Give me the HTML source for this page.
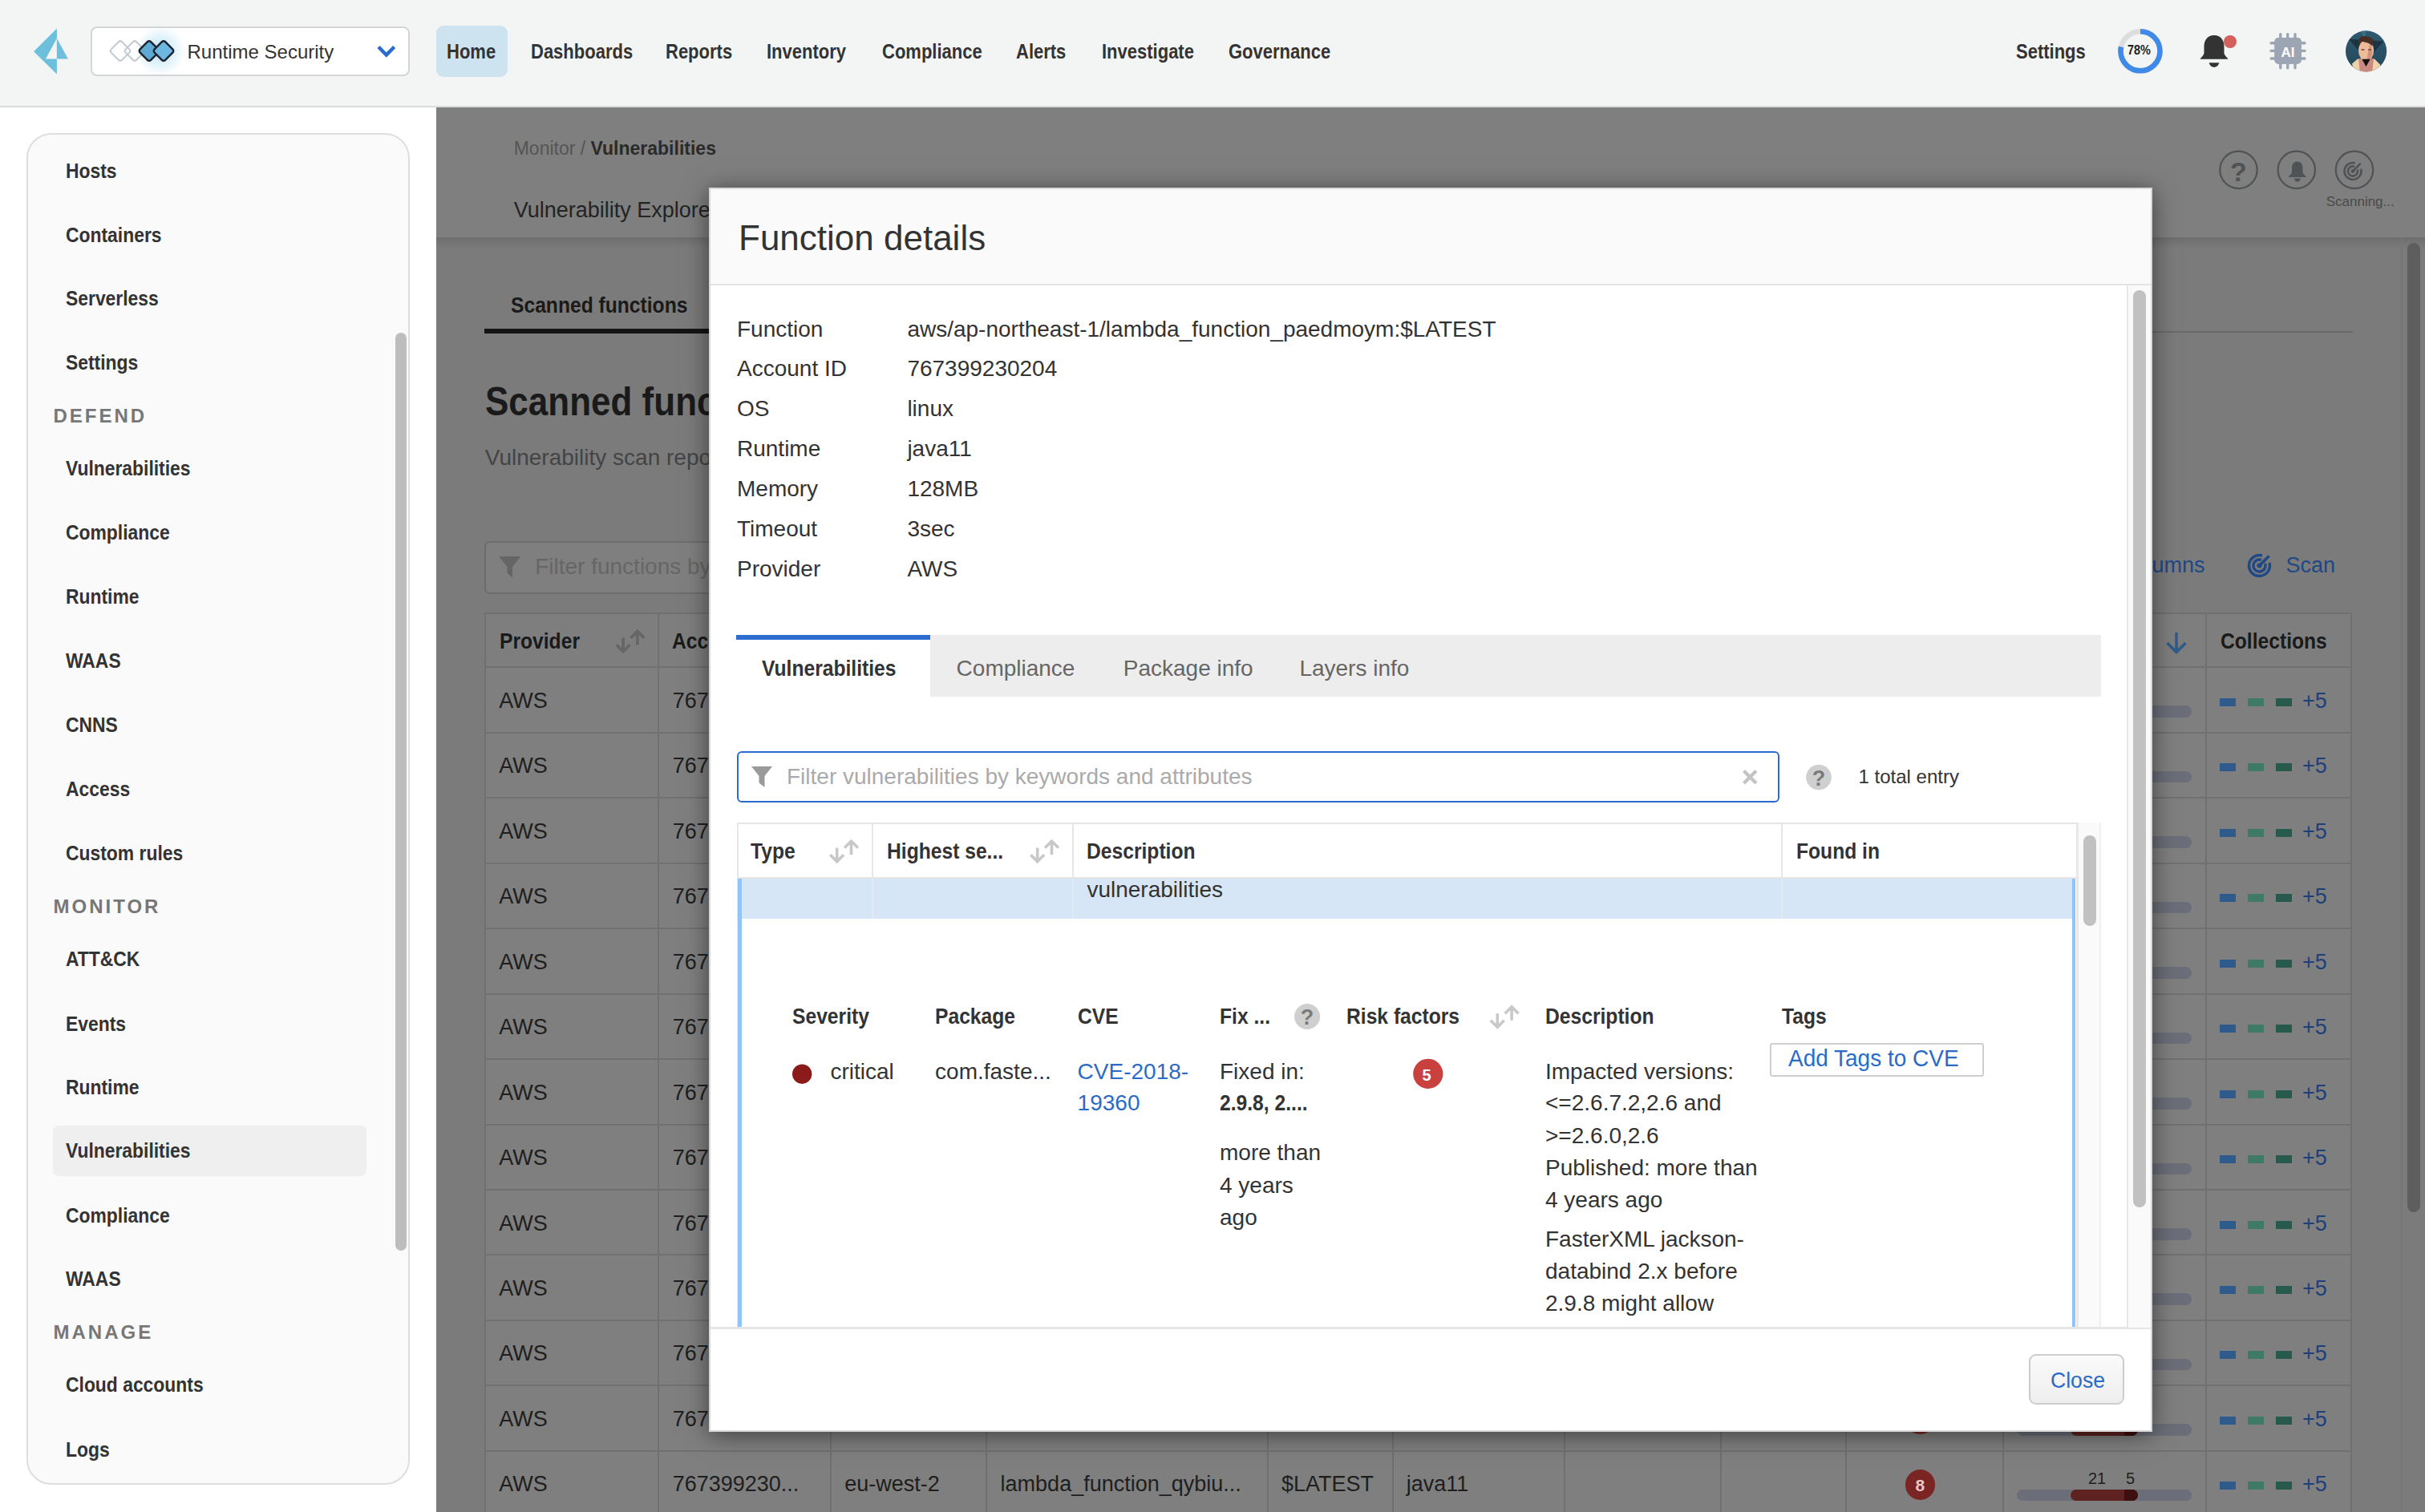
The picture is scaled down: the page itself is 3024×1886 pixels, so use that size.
<!DOCTYPE html><html><head><meta charset="utf-8"><style>
html,body{margin:0;padding:0;width:3024px;height:1886px;overflow:hidden;background:#fff;font-family:"Liberation Sans",sans-serif}
.t{position:absolute;line-height:1;white-space:nowrap;transform-origin:0 0}
.r{position:absolute}
svg{position:absolute;overflow:visible}
</style></head><body>

<div class="r" style="left:0px;top:0px;width:3024px;height:133px;background:#f3f4f4;"></div>
<div class="r" style="left:0px;top:132px;width:3024px;height:2px;background:#d9dcdd;"></div>
<svg style="left:0;top:0" width="100" height="100"><path d="M70.9,35.5 L42.1,64.3 L70.9,92.4 L70.9,73.4 L56.9,73.4 L70.9,47.8 Z" fill="#6cc0dc"/><path d="M70.9,47.8 L84.9,73.4 L70.9,73.4 Z" fill="#6cc0dc"/></svg>
<div class="r" style="left:113px;top:33px;width:398px;height:62px;background:#fff;border:2px solid #d3d5d7;border-radius:8px;box-sizing:border-box"></div>
<svg style="left:0;top:0" width="240" height="100"><defs><radialGradient id="glow"><stop offset="0" stop-color="#a8dcf4" stop-opacity="0.75"/><stop offset="1" stop-color="#9fd8f3" stop-opacity="0"/></radialGradient></defs><circle cx="200" cy="63.5" r="31" fill="url(#glow)"/><rect x="140.5" y="54" width="19" height="19" rx="3" transform="rotate(45 150 63.5)" fill="none" stroke="#c3c8d1" stroke-width="2"/><rect x="158.5" y="54" width="19" height="19" rx="3" transform="rotate(45 168 63.5)" fill="none" stroke="#c3c8d1" stroke-width="2"/><rect x="176.5" y="54" width="19" height="19" rx="3" transform="rotate(45 186 63.5)" fill="#5eaad4" stroke="#1d2630" stroke-width="2.5"/><rect x="194.5" y="54" width="19" height="19" rx="3" transform="rotate(45 204 63.5)" fill="#6db7e1" stroke="#1d2630" stroke-width="2.5"/></svg>
<div class="t" style="left:233.5px;top:72.6px;font-size:24px;color:#333;font-weight:400;transform:translateY(-20.32px);">Runtime Security</div>
<svg style="left:0;top:0" width="520" height="100"><path d="M472,58.5 L481.8,68.5 L491.6,58.5" fill="none" stroke="#2a6bd0" stroke-width="4.5"/></svg>
<div class="r" style="left:544px;top:32px;width:89px;height:64px;background:#cde4f0;border-radius:9px"></div>
<div class="t" style="left:556.7px;top:73.2px;font-size:25px;color:#333;font-weight:700;transform:translateY(-21.16px) scaleX(0.88);">Home</div>
<div class="t" style="left:661.5px;top:73.2px;font-size:25px;color:#333;font-weight:700;transform:translateY(-21.16px) scaleX(0.88);">Dashboards</div>
<div class="t" style="left:830.3px;top:73.2px;font-size:25px;color:#333;font-weight:700;transform:translateY(-21.16px) scaleX(0.88);">Reports</div>
<div class="t" style="left:956px;top:73.2px;font-size:25px;color:#333;font-weight:700;transform:translateY(-21.16px) scaleX(0.88);">Inventory</div>
<div class="t" style="left:1100px;top:73.2px;font-size:25px;color:#333;font-weight:700;transform:translateY(-21.16px) scaleX(0.88);">Compliance</div>
<div class="t" style="left:1267px;top:73.2px;font-size:25px;color:#333;font-weight:700;transform:translateY(-21.16px) scaleX(0.88);">Alerts</div>
<div class="t" style="left:1373.8px;top:73.2px;font-size:25px;color:#333;font-weight:700;transform:translateY(-21.16px) scaleX(0.88);">Investigate</div>
<div class="t" style="left:1532.4px;top:73.2px;font-size:25px;color:#333;font-weight:700;transform:translateY(-21.16px) scaleX(0.88);">Governance</div>
<div class="t" style="left:2514px;top:73.3px;font-size:25px;color:#333;font-weight:700;transform:translateY(-21.16px) scaleX(0.88);">Settings</div>
<svg style="left:0;top:0" width="3024" height="134"><circle cx="2669" cy="63.8" r="24.5" fill="none" stroke="#dddddd" stroke-width="6.6"/><circle cx="2669" cy="63.8" r="24.5" fill="none" stroke="#3f8ae8" stroke-width="6.6" stroke-dasharray="120.07 153.94" transform="rotate(-90 2669 63.8)"/></svg>
<div class="t" style="left:2653px;top:68.9px;font-size:16px;color:#222;font-weight:700;transform:translateY(-13.54px) scaleX(0.9);">78%</div>
<svg style="left:0;top:0" width="3024" height="134"><path d="M2761,44 C2752,44 2748.5,51 2748.5,58 L2748.5,66 C2748.5,69 2745,71 2743.6,73.8 L2778.5,73.8 C2777,71 2773.5,69 2773.5,66 L2773.5,58 C2773.5,51 2770,44 2761,44 Z" fill="#333"/><path d="M2754.7,78.2 L2767.3,78.2 C2766.5,81.5 2764,83.7 2761,83.7 C2758,83.7 2755.5,81.5 2754.7,78.2 Z" fill="#333"/><circle cx="2781" cy="52" r="8" fill="#d45f5b"/></svg>
<svg style="left:0;top:0" width="3024" height="134"><g fill="#9ca5b3"><rect x="2836.4" y="47" width="33.4" height="32.7" rx="5"/><rect x="2842.1000000000004" y="41" width="3.4" height="45.5" rx="1.7"/><rect x="2851.0" y="41" width="3.4" height="45.5" rx="1.7"/><rect x="2860.3" y="41" width="3.4" height="45.5" rx="1.7"/><rect x="2830.4" y="52.099999999999994" width="45.3" height="3.4" rx="1.7"/><rect x="2830.4" y="61.699999999999996" width="45.3" height="3.4" rx="1.7"/><rect x="2830.4" y="71.3" width="45.3" height="3.4" rx="1.7"/><rect x="2836.4" y="47" width="33.4" height="32.7" rx="5"/></g><text x="2853" y="71" font-family="Liberation Sans" font-weight="700" font-size="17" fill="#fff" text-anchor="middle">AI</text></svg>
<svg style="left:0;top:0" width="3024" height="134"><defs><clipPath id="av"><circle cx="2950.6" cy="63.8" r="25.6"/></clipPath><linearGradient id="avg" x1="0" y1="0" x2="0" y2="1"><stop offset="0" stop-color="#2e5a70"/><stop offset="1" stop-color="#24475a"/></linearGradient></defs><g clip-path="url(#av)"><rect x="2924" y="37" width="54" height="54" fill="url(#avg)"/><path d="M2944,37 L2951,37 L2948,50 Z" fill="#3f7590" opacity="0.8"/><path d="M2929.1,48.7 L2972.4,51.5 L2951.3,75 Z" fill="#1c3442"/><path d="M2933,79.6 L2940,73.5 L2961,73.5 L2968.5,81 L2964,92 L2936,92 Z" fill="#f1d2a8"/><path d="M2941,73 L2960,73 L2958,92 L2943,92 Z" fill="#c98a82"/><ellipse cx="2950.6" cy="63" rx="9.6" ry="13" fill="#eebc9a"/><path d="M2955,55 C2959,60 2960,68 2955,75 L2951,76 Z" fill="#c47f6c" opacity="0.7"/><path d="M2940.6,56 C2940,48 2944,45 2948,45 C2953,45 2958,47 2961,51 L2958,53 C2958,58 2959.5,60 2959.5,60 C2957,54 2950,52 2944,52 C2942,54 2941.5,57 2940.6,56 Z" fill="#4a2e26"/><ellipse cx="2946.5" cy="62" rx="2.2" ry="1" fill="#7b5450"/><ellipse cx="2955" cy="62" rx="2.2" ry="1" fill="#7b5450"/><path d="M2945.4,73.7 L2955.7,73.7 L2950.5,83 Z" fill="#111"/></g></svg>
<div class="r" style="left:33px;top:166px;width:478px;height:1686px;background:#fafafa;border:2px solid #dedede;border-radius:31px;box-sizing:border-box"></div>
<div class="r" style="left:493px;top:415px;width:14px;height:1145px;background:#bdbdbd;border-radius:7px"></div>
<div class="r" style="left:66px;top:1404px;width:391px;height:63px;background:#efefef;border-radius:7px"></div>
<div class="t" style="left:82.2px;top:221.6px;font-size:26px;color:#333;font-weight:700;transform:translateY(-22.01px) scaleX(0.88);">Hosts</div>
<div class="t" style="left:82.2px;top:301.6px;font-size:26px;color:#333;font-weight:700;transform:translateY(-22.01px) scaleX(0.88);">Containers</div>
<div class="t" style="left:82.2px;top:380.8px;font-size:26px;color:#333;font-weight:700;transform:translateY(-22.01px) scaleX(0.88);">Serverless</div>
<div class="t" style="left:82.2px;top:461px;font-size:26px;color:#333;font-weight:700;transform:translateY(-22.01px) scaleX(0.88);">Settings</div>
<div class="t" style="left:82.2px;top:593px;font-size:26px;color:#333;font-weight:700;transform:translateY(-22.01px) scaleX(0.88);">Vulnerabilities</div>
<div class="t" style="left:82.2px;top:673px;font-size:26px;color:#333;font-weight:700;transform:translateY(-22.01px) scaleX(0.88);">Compliance</div>
<div class="t" style="left:82.2px;top:753px;font-size:26px;color:#333;font-weight:700;transform:translateY(-22.01px) scaleX(0.88);">Runtime</div>
<div class="t" style="left:82.2px;top:833px;font-size:26px;color:#333;font-weight:700;transform:translateY(-22.01px) scaleX(0.88);">WAAS</div>
<div class="t" style="left:82.2px;top:913px;font-size:26px;color:#333;font-weight:700;transform:translateY(-22.01px) scaleX(0.88);">CNNS</div>
<div class="t" style="left:82.2px;top:993px;font-size:26px;color:#333;font-weight:700;transform:translateY(-22.01px) scaleX(0.88);">Access</div>
<div class="t" style="left:82.2px;top:1073px;font-size:26px;color:#333;font-weight:700;transform:translateY(-22.01px) scaleX(0.88);">Custom rules</div>
<div class="t" style="left:82.2px;top:1205px;font-size:26px;color:#333;font-weight:700;transform:translateY(-22.01px) scaleX(0.88);">ATT&amp;CK</div>
<div class="t" style="left:82.2px;top:1285.5px;font-size:26px;color:#333;font-weight:700;transform:translateY(-22.01px) scaleX(0.88);">Events</div>
<div class="t" style="left:82.2px;top:1365px;font-size:26px;color:#333;font-weight:700;transform:translateY(-22.01px) scaleX(0.88);">Runtime</div>
<div class="t" style="left:82.2px;top:1444.4px;font-size:26px;color:#333;font-weight:700;transform:translateY(-22.01px) scaleX(0.88);">Vulnerabilities</div>
<div class="t" style="left:82.2px;top:1525px;font-size:26px;color:#333;font-weight:700;transform:translateY(-22.01px) scaleX(0.88);">Compliance</div>
<div class="t" style="left:82.2px;top:1604px;font-size:26px;color:#333;font-weight:700;transform:translateY(-22.01px) scaleX(0.88);">WAAS</div>
<div class="t" style="left:82.2px;top:1736.4px;font-size:26px;color:#333;font-weight:700;transform:translateY(-22.01px) scaleX(0.88);">Cloud accounts</div>
<div class="t" style="left:82.2px;top:1817px;font-size:26px;color:#333;font-weight:700;transform:translateY(-22.01px) scaleX(0.88);">Logs</div>
<div class="t" style="left:66.5px;top:526.7px;font-size:24px;color:#777;font-weight:700;transform:translateY(-20.32px);letter-spacing:3px">DEFEND</div>
<div class="t" style="left:66.5px;top:1139px;font-size:24px;color:#777;font-weight:700;transform:translateY(-20.32px);letter-spacing:3px">MONITOR</div>
<div class="t" style="left:66.5px;top:1670.4px;font-size:24px;color:#777;font-weight:700;transform:translateY(-20.32px);letter-spacing:3px">MANAGE</div>
<div class="r" style="left:544px;top:134px;width:2480px;height:1752px;background:#7b7b7b;"></div>
<div class="r" style="left:544px;top:134px;width:2480px;height:162px;background:#7f7f7f;"></div>
<div class="r" style="left:544px;top:296px;width:2480px;height:14px;background:linear-gradient(#6e6e6e,#7b7b7b)"></div>
<div class="t" style="left:640.7px;top:192.6px;font-size:23px;color:#555;font-weight:400;transform:translateY(-19.47px);">Monitor / <span style="color:#2a2a2a;font-weight:700">Vulnerabilities</span></div>
<div class="t" style="left:640.7px;top:272px;font-size:27px;color:#232323;font-weight:400;transform:translateY(-22.86px);">Vulnerability Explorer</div>
<div class="t" style="left:636.6px;top:390.5px;font-size:28px;color:#1a1a1a;font-weight:700;transform:translateY(-23.70px) scaleX(0.88);">Scanned functions</div>
<div class="r" style="left:604px;top:413px;width:2330px;height:2px;background:#6a6a6a;"></div>
<div class="r" style="left:604px;top:410px;width:296px;height:6px;background:#141414;"></div>
<div class="t" style="left:604.8px;top:518px;font-size:50px;color:#1a1a1a;font-weight:700;transform:translateY(-42.33px) scaleX(0.88);">Scanned functions</div>
<div class="t" style="left:604.8px;top:581px;font-size:28px;color:#444;font-weight:400;transform:translateY(-23.70px);">Vulnerability scan reports</div>
<div class="r" style="left:604px;top:675px;width:1956px;height:65.5px;background:#7f7f7f;border:2px solid #6c6c6c;border-radius:7px;box-sizing:border-box"></div>
<svg style="left:0;top:0" width="700" height="760"><path d="M622,694 L649.4,694 L639,707 L639,720.5 L632.5,715 L632.5,707 Z" fill="#656565"/></svg>
<div class="t" style="left:667.2px;top:716.7px;font-size:28px;color:#666;font-weight:400;transform:translateY(-23.70px);">Filter functions by keywords and attributes</div>
<div class="t" style="left:2642.9px;top:714.6px;font-size:27px;color:#1e4886;font-weight:400;transform:translateY(-22.86px);">Columns</div>
<svg style="left:0;top:0" width="3024" height="760"><g fill="none" stroke="#1e4886" stroke-width="3.4" stroke-linecap="round"><path d="M2830.30,703.24 A13,13 0 1 1 2819.76,692.70"/><path d="M2824.93,704.19 A7.539999999999999,7.539999999999999 0 1 1 2818.81,698.07"/><path d="M2817.5,705.5 L2828.55,694.45"/></g><circle cx="2817.5" cy="705.5" r="3.06" fill="#1e4886"/></svg>
<div class="t" style="left:2850.6px;top:714.6px;font-size:27px;color:#1e4886;font-weight:400;transform:translateY(-22.86px);">Scan</div>
<div class="r" style="left:2994px;top:296px;width:2px;height:1590px;background:#767676;"></div>
<div class="r" style="left:3002px;top:303px;width:16px;height:1209px;background:#5e5e5e;border-radius:8px"></div>
<div class="r" style="left:605px;top:765px;width:2327px;height:1121px;background:#7f7f7f;"></div>
<div class="r" style="left:605px;top:765px;width:2327px;height:68px;background:#7e7e7e;"></div>
<div class="r" style="left:604px;top:765px;width:2px;height:1121px;background:#707070;"></div>
<div class="r" style="left:819.6px;top:765px;width:2.0px;height:1121px;background:#707070;"></div>
<div class="r" style="left:1035.4px;top:765px;width:2.0px;height:1121px;background:#707070;"></div>
<div class="r" style="left:1229px;top:765px;width:2px;height:1121px;background:#707070;"></div>
<div class="r" style="left:1580px;top:765px;width:2px;height:1121px;background:#707070;"></div>
<div class="r" style="left:1735.8px;top:765px;width:2.0px;height:1121px;background:#707070;"></div>
<div class="r" style="left:1949.6px;top:765px;width:2.0px;height:1121px;background:#707070;"></div>
<div class="r" style="left:2145px;top:765px;width:2px;height:1121px;background:#707070;"></div>
<div class="r" style="left:2300.7px;top:765px;width:2.0px;height:1121px;background:#707070;"></div>
<div class="r" style="left:2497.4px;top:765px;width:2.0px;height:1121px;background:#707070;"></div>
<div class="r" style="left:2750px;top:765px;width:2px;height:1121px;background:#707070;"></div>
<div class="r" style="left:2931px;top:765px;width:2px;height:1121px;background:#707070;"></div>
<div class="r" style="left:605px;top:764px;width:2327px;height:2px;background:#707070;"></div>
<div class="r" style="left:605px;top:831.4px;width:2327px;height:2.0px;background:#707070;"></div>
<div class="r" style="left:605px;top:912.85px;width:2327px;height:2.0px;background:#707070;"></div>
<div class="r" style="left:605px;top:994.3px;width:2327px;height:2.0px;background:#707070;"></div>
<div class="r" style="left:605px;top:1075.75px;width:2327px;height:2.0px;background:#707070;"></div>
<div class="r" style="left:605px;top:1157.2px;width:2327px;height:2.0px;background:#707070;"></div>
<div class="r" style="left:605px;top:1238.65px;width:2327px;height:2.0px;background:#707070;"></div>
<div class="r" style="left:605px;top:1320.1px;width:2327px;height:2.0px;background:#707070;"></div>
<div class="r" style="left:605px;top:1401.55px;width:2327px;height:2.0px;background:#707070;"></div>
<div class="r" style="left:605px;top:1483.0px;width:2327px;height:2.0px;background:#707070;"></div>
<div class="r" style="left:605px;top:1564.45px;width:2327px;height:2.0px;background:#707070;"></div>
<div class="r" style="left:605px;top:1645.9px;width:2327px;height:2.0px;background:#707070;"></div>
<div class="r" style="left:605px;top:1727.35px;width:2327px;height:2.0px;background:#707070;"></div>
<div class="r" style="left:605px;top:1808.8000000000002px;width:2327px;height:2.0px;background:#707070;"></div>
<div class="r" style="left:605px;top:1890.25px;width:2327px;height:2.0px;background:#707070;"></div>
<div class="t" style="left:623.4px;top:809.8px;font-size:28px;color:#1a1a1a;font-weight:700;transform:translateY(-23.70px) scaleX(0.88);">Provider</div>
<div class="t" style="left:838.2px;top:809.8px;font-size:28px;color:#1a1a1a;font-weight:700;transform:translateY(-23.70px) scaleX(0.88);">Account ID</div>
<div class="t" style="left:2768.7px;top:809.7px;font-size:28px;color:#1a1a1a;font-weight:700;transform:translateY(-23.70px) scaleX(0.88);">Collections</div>
<svg style="left:0;top:0" width="3024" height="900"><g fill="none" stroke="#2f5a8a" stroke-width="3.5"><path d="M2714,789 L2714,813"/><path d="M2702.5,802 L2714,813.5 L2725.5,802"/></g></svg>
<svg style="left:0;top:0" width="3024" height="900"><g fill="none" stroke="#656565" stroke-width="3.6"><path d="M777.1,795.7 L777.1,812.0"/><path d="M768.6999999999999,804.3 L777.1,812.7 L785.5,804.3"/><path d="M794.9,804.3 L794.9,788.0"/><path d="M786.5,795.7 L794.9,787.3 L803.3,795.7"/></g></svg>
<div class="t" style="left:622.3px;top:883.9px;font-size:27px;color:#1e1e1e;font-weight:400;transform:translateY(-22.86px);">AWS</div>
<div class="t" style="left:838.7px;top:883.9px;font-size:27px;color:#1e1e1e;font-weight:400;transform:translateY(-22.86px);">767399230...</div>
<div class="t" style="left:1053.3px;top:883.9px;font-size:27px;color:#1e1e1e;font-weight:400;transform:translateY(-22.86px);">eu-west-2</div>
<div class="t" style="left:1247.6px;top:883.9px;font-size:27px;color:#1e1e1e;font-weight:400;transform:translateY(-22.86px);">lambda_function_qybiu...</div>
<div class="t" style="left:1598px;top:883.9px;font-size:27px;color:#1e1e1e;font-weight:400;transform:translateY(-22.86px);">$LATEST</div>
<div class="t" style="left:1753.8px;top:883.9px;font-size:27px;color:#1e1e1e;font-weight:400;transform:translateY(-22.86px);">java11</div>
<div class="r" style="left:2375.7px;top:855.8000000000001px;width:37.6px;height:37.6px;border-radius:50%;background:#7a2424"></div>
<div class="t" style="left:2388.5px;top:882.1px;font-size:21px;color:#e8c8c8;font-weight:700;transform:translateY(-17.78px);">8</div>
<div class="r" style="left:2515px;top:880.4px;width:218px;height:14.5px;background:#6b6e78;border-radius:8px"></div>
<div class="r" style="left:2582px;top:880.4px;width:84px;height:14.5px;background:#5e2220;border-radius:8px"></div>
<div class="r" style="left:2649px;top:880.4px;width:17px;height:14.5px;background:#3e0f0f;border-radius:0 8px 8px 0"></div>
<div class="t" style="left:2604px;top:873.4px;font-size:20px;color:#1e1e1e;font-weight:400;transform:translateY(-16.93px);">21</div>
<div class="t" style="left:2651px;top:873.4px;font-size:20px;color:#1e1e1e;font-weight:400;transform:translateY(-16.93px);">5</div>
<div class="r" style="left:2768px;top:870.9px;width:20px;height:10.0px;background:#2f5a8c;"></div>
<div class="r" style="left:2803px;top:870.9px;width:20px;height:10.0px;background:#3f7a66;"></div>
<div class="r" style="left:2838px;top:870.9px;width:20px;height:10.0px;background:#275a4c;"></div>
<div class="t" style="left:2871px;top:883.9px;font-size:27px;color:#1d3f7a;font-weight:400;transform:translateY(-22.86px);">+5</div>
<div class="t" style="left:622.3px;top:965.35px;font-size:27px;color:#1e1e1e;font-weight:400;transform:translateY(-22.86px);">AWS</div>
<div class="t" style="left:838.7px;top:965.35px;font-size:27px;color:#1e1e1e;font-weight:400;transform:translateY(-22.86px);">767399230...</div>
<div class="t" style="left:1053.3px;top:965.35px;font-size:27px;color:#1e1e1e;font-weight:400;transform:translateY(-22.86px);">eu-west-2</div>
<div class="t" style="left:1247.6px;top:965.35px;font-size:27px;color:#1e1e1e;font-weight:400;transform:translateY(-22.86px);">lambda_function_qybiu...</div>
<div class="t" style="left:1598px;top:965.35px;font-size:27px;color:#1e1e1e;font-weight:400;transform:translateY(-22.86px);">$LATEST</div>
<div class="t" style="left:1753.8px;top:965.35px;font-size:27px;color:#1e1e1e;font-weight:400;transform:translateY(-22.86px);">java11</div>
<div class="r" style="left:2375.7px;top:937.2500000000001px;width:37.6px;height:37.6px;border-radius:50%;background:#7a2424"></div>
<div class="t" style="left:2388.5px;top:963.5500000000001px;font-size:21px;color:#e8c8c8;font-weight:700;transform:translateY(-17.78px);">8</div>
<div class="r" style="left:2515px;top:961.85px;width:218px;height:14.5px;background:#6b6e78;border-radius:8px"></div>
<div class="r" style="left:2582px;top:961.85px;width:84px;height:14.5px;background:#5e2220;border-radius:8px"></div>
<div class="r" style="left:2649px;top:961.85px;width:17px;height:14.5px;background:#3e0f0f;border-radius:0 8px 8px 0"></div>
<div class="t" style="left:2604px;top:954.85px;font-size:20px;color:#1e1e1e;font-weight:400;transform:translateY(-16.93px);">21</div>
<div class="t" style="left:2651px;top:954.85px;font-size:20px;color:#1e1e1e;font-weight:400;transform:translateY(-16.93px);">5</div>
<div class="r" style="left:2768px;top:952.35px;width:20px;height:10.0px;background:#2f5a8c;"></div>
<div class="r" style="left:2803px;top:952.35px;width:20px;height:10.0px;background:#3f7a66;"></div>
<div class="r" style="left:2838px;top:952.35px;width:20px;height:10.0px;background:#275a4c;"></div>
<div class="t" style="left:2871px;top:965.35px;font-size:27px;color:#1d3f7a;font-weight:400;transform:translateY(-22.86px);">+5</div>
<div class="t" style="left:622.3px;top:1046.8px;font-size:27px;color:#1e1e1e;font-weight:400;transform:translateY(-22.86px);">AWS</div>
<div class="t" style="left:838.7px;top:1046.8px;font-size:27px;color:#1e1e1e;font-weight:400;transform:translateY(-22.86px);">767399230...</div>
<div class="t" style="left:1053.3px;top:1046.8px;font-size:27px;color:#1e1e1e;font-weight:400;transform:translateY(-22.86px);">eu-west-2</div>
<div class="t" style="left:1247.6px;top:1046.8px;font-size:27px;color:#1e1e1e;font-weight:400;transform:translateY(-22.86px);">lambda_function_qybiu...</div>
<div class="t" style="left:1598px;top:1046.8px;font-size:27px;color:#1e1e1e;font-weight:400;transform:translateY(-22.86px);">$LATEST</div>
<div class="t" style="left:1753.8px;top:1046.8px;font-size:27px;color:#1e1e1e;font-weight:400;transform:translateY(-22.86px);">java11</div>
<div class="r" style="left:2375.7px;top:1018.7px;width:37.6px;height:37.6px;border-radius:50%;background:#7a2424"></div>
<div class="t" style="left:2388.5px;top:1045.0px;font-size:21px;color:#e8c8c8;font-weight:700;transform:translateY(-17.78px);">8</div>
<div class="r" style="left:2515px;top:1043.3px;width:218px;height:14.5px;background:#6b6e78;border-radius:8px"></div>
<div class="r" style="left:2582px;top:1043.3px;width:84px;height:14.5px;background:#5e2220;border-radius:8px"></div>
<div class="r" style="left:2649px;top:1043.3px;width:17px;height:14.5px;background:#3e0f0f;border-radius:0 8px 8px 0"></div>
<div class="t" style="left:2604px;top:1036.3px;font-size:20px;color:#1e1e1e;font-weight:400;transform:translateY(-16.93px);">21</div>
<div class="t" style="left:2651px;top:1036.3px;font-size:20px;color:#1e1e1e;font-weight:400;transform:translateY(-16.93px);">5</div>
<div class="r" style="left:2768px;top:1033.8px;width:20px;height:10.0px;background:#2f5a8c;"></div>
<div class="r" style="left:2803px;top:1033.8px;width:20px;height:10.0px;background:#3f7a66;"></div>
<div class="r" style="left:2838px;top:1033.8px;width:20px;height:10.0px;background:#275a4c;"></div>
<div class="t" style="left:2871px;top:1046.8px;font-size:27px;color:#1d3f7a;font-weight:400;transform:translateY(-22.86px);">+5</div>
<div class="t" style="left:622.3px;top:1128.25px;font-size:27px;color:#1e1e1e;font-weight:400;transform:translateY(-22.86px);">AWS</div>
<div class="t" style="left:838.7px;top:1128.25px;font-size:27px;color:#1e1e1e;font-weight:400;transform:translateY(-22.86px);">767399230...</div>
<div class="t" style="left:1053.3px;top:1128.25px;font-size:27px;color:#1e1e1e;font-weight:400;transform:translateY(-22.86px);">eu-west-2</div>
<div class="t" style="left:1247.6px;top:1128.25px;font-size:27px;color:#1e1e1e;font-weight:400;transform:translateY(-22.86px);">lambda_function_qybiu...</div>
<div class="t" style="left:1598px;top:1128.25px;font-size:27px;color:#1e1e1e;font-weight:400;transform:translateY(-22.86px);">$LATEST</div>
<div class="t" style="left:1753.8px;top:1128.25px;font-size:27px;color:#1e1e1e;font-weight:400;transform:translateY(-22.86px);">java11</div>
<div class="r" style="left:2375.7px;top:1100.15px;width:37.6px;height:37.6px;border-radius:50%;background:#7a2424"></div>
<div class="t" style="left:2388.5px;top:1126.45px;font-size:21px;color:#e8c8c8;font-weight:700;transform:translateY(-17.78px);">8</div>
<div class="r" style="left:2515px;top:1124.75px;width:218px;height:14.5px;background:#6b6e78;border-radius:8px"></div>
<div class="r" style="left:2582px;top:1124.75px;width:84px;height:14.5px;background:#5e2220;border-radius:8px"></div>
<div class="r" style="left:2649px;top:1124.75px;width:17px;height:14.5px;background:#3e0f0f;border-radius:0 8px 8px 0"></div>
<div class="t" style="left:2604px;top:1117.75px;font-size:20px;color:#1e1e1e;font-weight:400;transform:translateY(-16.93px);">21</div>
<div class="t" style="left:2651px;top:1117.75px;font-size:20px;color:#1e1e1e;font-weight:400;transform:translateY(-16.93px);">5</div>
<div class="r" style="left:2768px;top:1115.25px;width:20px;height:10.0px;background:#2f5a8c;"></div>
<div class="r" style="left:2803px;top:1115.25px;width:20px;height:10.0px;background:#3f7a66;"></div>
<div class="r" style="left:2838px;top:1115.25px;width:20px;height:10.0px;background:#275a4c;"></div>
<div class="t" style="left:2871px;top:1128.25px;font-size:27px;color:#1d3f7a;font-weight:400;transform:translateY(-22.86px);">+5</div>
<div class="t" style="left:622.3px;top:1209.7px;font-size:27px;color:#1e1e1e;font-weight:400;transform:translateY(-22.86px);">AWS</div>
<div class="t" style="left:838.7px;top:1209.7px;font-size:27px;color:#1e1e1e;font-weight:400;transform:translateY(-22.86px);">767399230...</div>
<div class="t" style="left:1053.3px;top:1209.7px;font-size:27px;color:#1e1e1e;font-weight:400;transform:translateY(-22.86px);">eu-west-2</div>
<div class="t" style="left:1247.6px;top:1209.7px;font-size:27px;color:#1e1e1e;font-weight:400;transform:translateY(-22.86px);">lambda_function_qybiu...</div>
<div class="t" style="left:1598px;top:1209.7px;font-size:27px;color:#1e1e1e;font-weight:400;transform:translateY(-22.86px);">$LATEST</div>
<div class="t" style="left:1753.8px;top:1209.7px;font-size:27px;color:#1e1e1e;font-weight:400;transform:translateY(-22.86px);">java11</div>
<div class="r" style="left:2375.7px;top:1181.6000000000001px;width:37.6px;height:37.6px;border-radius:50%;background:#7a2424"></div>
<div class="t" style="left:2388.5px;top:1207.9px;font-size:21px;color:#e8c8c8;font-weight:700;transform:translateY(-17.78px);">8</div>
<div class="r" style="left:2515px;top:1206.2px;width:218px;height:14.5px;background:#6b6e78;border-radius:8px"></div>
<div class="r" style="left:2582px;top:1206.2px;width:84px;height:14.5px;background:#5e2220;border-radius:8px"></div>
<div class="r" style="left:2649px;top:1206.2px;width:17px;height:14.5px;background:#3e0f0f;border-radius:0 8px 8px 0"></div>
<div class="t" style="left:2604px;top:1199.2px;font-size:20px;color:#1e1e1e;font-weight:400;transform:translateY(-16.93px);">21</div>
<div class="t" style="left:2651px;top:1199.2px;font-size:20px;color:#1e1e1e;font-weight:400;transform:translateY(-16.93px);">5</div>
<div class="r" style="left:2768px;top:1196.7px;width:20px;height:10.0px;background:#2f5a8c;"></div>
<div class="r" style="left:2803px;top:1196.7px;width:20px;height:10.0px;background:#3f7a66;"></div>
<div class="r" style="left:2838px;top:1196.7px;width:20px;height:10.0px;background:#275a4c;"></div>
<div class="t" style="left:2871px;top:1209.7px;font-size:27px;color:#1d3f7a;font-weight:400;transform:translateY(-22.86px);">+5</div>
<div class="t" style="left:622.3px;top:1291.15px;font-size:27px;color:#1e1e1e;font-weight:400;transform:translateY(-22.86px);">AWS</div>
<div class="t" style="left:838.7px;top:1291.15px;font-size:27px;color:#1e1e1e;font-weight:400;transform:translateY(-22.86px);">767399230...</div>
<div class="t" style="left:1053.3px;top:1291.15px;font-size:27px;color:#1e1e1e;font-weight:400;transform:translateY(-22.86px);">eu-west-2</div>
<div class="t" style="left:1247.6px;top:1291.15px;font-size:27px;color:#1e1e1e;font-weight:400;transform:translateY(-22.86px);">lambda_function_qybiu...</div>
<div class="t" style="left:1598px;top:1291.15px;font-size:27px;color:#1e1e1e;font-weight:400;transform:translateY(-22.86px);">$LATEST</div>
<div class="t" style="left:1753.8px;top:1291.15px;font-size:27px;color:#1e1e1e;font-weight:400;transform:translateY(-22.86px);">java11</div>
<div class="r" style="left:2375.7px;top:1263.0500000000002px;width:37.6px;height:37.6px;border-radius:50%;background:#7a2424"></div>
<div class="t" style="left:2388.5px;top:1289.3500000000001px;font-size:21px;color:#e8c8c8;font-weight:700;transform:translateY(-17.78px);">8</div>
<div class="r" style="left:2515px;top:1287.65px;width:218px;height:14.5px;background:#6b6e78;border-radius:8px"></div>
<div class="r" style="left:2582px;top:1287.65px;width:84px;height:14.5px;background:#5e2220;border-radius:8px"></div>
<div class="r" style="left:2649px;top:1287.65px;width:17px;height:14.5px;background:#3e0f0f;border-radius:0 8px 8px 0"></div>
<div class="t" style="left:2604px;top:1280.65px;font-size:20px;color:#1e1e1e;font-weight:400;transform:translateY(-16.93px);">21</div>
<div class="t" style="left:2651px;top:1280.65px;font-size:20px;color:#1e1e1e;font-weight:400;transform:translateY(-16.93px);">5</div>
<div class="r" style="left:2768px;top:1278.15px;width:20px;height:10.0px;background:#2f5a8c;"></div>
<div class="r" style="left:2803px;top:1278.15px;width:20px;height:10.0px;background:#3f7a66;"></div>
<div class="r" style="left:2838px;top:1278.15px;width:20px;height:10.0px;background:#275a4c;"></div>
<div class="t" style="left:2871px;top:1291.15px;font-size:27px;color:#1d3f7a;font-weight:400;transform:translateY(-22.86px);">+5</div>
<div class="t" style="left:622.3px;top:1372.6px;font-size:27px;color:#1e1e1e;font-weight:400;transform:translateY(-22.86px);">AWS</div>
<div class="t" style="left:838.7px;top:1372.6px;font-size:27px;color:#1e1e1e;font-weight:400;transform:translateY(-22.86px);">767399230...</div>
<div class="t" style="left:1053.3px;top:1372.6px;font-size:27px;color:#1e1e1e;font-weight:400;transform:translateY(-22.86px);">eu-west-2</div>
<div class="t" style="left:1247.6px;top:1372.6px;font-size:27px;color:#1e1e1e;font-weight:400;transform:translateY(-22.86px);">lambda_function_qybiu...</div>
<div class="t" style="left:1598px;top:1372.6px;font-size:27px;color:#1e1e1e;font-weight:400;transform:translateY(-22.86px);">$LATEST</div>
<div class="t" style="left:1753.8px;top:1372.6px;font-size:27px;color:#1e1e1e;font-weight:400;transform:translateY(-22.86px);">java11</div>
<div class="r" style="left:2375.7px;top:1344.5px;width:37.6px;height:37.6px;border-radius:50%;background:#7a2424"></div>
<div class="t" style="left:2388.5px;top:1370.8px;font-size:21px;color:#e8c8c8;font-weight:700;transform:translateY(-17.78px);">8</div>
<div class="r" style="left:2515px;top:1369.1px;width:218px;height:14.5px;background:#6b6e78;border-radius:8px"></div>
<div class="r" style="left:2582px;top:1369.1px;width:84px;height:14.5px;background:#5e2220;border-radius:8px"></div>
<div class="r" style="left:2649px;top:1369.1px;width:17px;height:14.5px;background:#3e0f0f;border-radius:0 8px 8px 0"></div>
<div class="t" style="left:2604px;top:1362.1px;font-size:20px;color:#1e1e1e;font-weight:400;transform:translateY(-16.93px);">21</div>
<div class="t" style="left:2651px;top:1362.1px;font-size:20px;color:#1e1e1e;font-weight:400;transform:translateY(-16.93px);">5</div>
<div class="r" style="left:2768px;top:1359.6px;width:20px;height:10.0px;background:#2f5a8c;"></div>
<div class="r" style="left:2803px;top:1359.6px;width:20px;height:10.0px;background:#3f7a66;"></div>
<div class="r" style="left:2838px;top:1359.6px;width:20px;height:10.0px;background:#275a4c;"></div>
<div class="t" style="left:2871px;top:1372.6px;font-size:27px;color:#1d3f7a;font-weight:400;transform:translateY(-22.86px);">+5</div>
<div class="t" style="left:622.3px;top:1454.05px;font-size:27px;color:#1e1e1e;font-weight:400;transform:translateY(-22.86px);">AWS</div>
<div class="t" style="left:838.7px;top:1454.05px;font-size:27px;color:#1e1e1e;font-weight:400;transform:translateY(-22.86px);">767399230...</div>
<div class="t" style="left:1053.3px;top:1454.05px;font-size:27px;color:#1e1e1e;font-weight:400;transform:translateY(-22.86px);">eu-west-2</div>
<div class="t" style="left:1247.6px;top:1454.05px;font-size:27px;color:#1e1e1e;font-weight:400;transform:translateY(-22.86px);">lambda_function_qybiu...</div>
<div class="t" style="left:1598px;top:1454.05px;font-size:27px;color:#1e1e1e;font-weight:400;transform:translateY(-22.86px);">$LATEST</div>
<div class="t" style="left:1753.8px;top:1454.05px;font-size:27px;color:#1e1e1e;font-weight:400;transform:translateY(-22.86px);">java11</div>
<div class="r" style="left:2375.7px;top:1425.95px;width:37.6px;height:37.6px;border-radius:50%;background:#7a2424"></div>
<div class="t" style="left:2388.5px;top:1452.25px;font-size:21px;color:#e8c8c8;font-weight:700;transform:translateY(-17.78px);">8</div>
<div class="r" style="left:2515px;top:1450.55px;width:218px;height:14.5px;background:#6b6e78;border-radius:8px"></div>
<div class="r" style="left:2582px;top:1450.55px;width:84px;height:14.5px;background:#5e2220;border-radius:8px"></div>
<div class="r" style="left:2649px;top:1450.55px;width:17px;height:14.5px;background:#3e0f0f;border-radius:0 8px 8px 0"></div>
<div class="t" style="left:2604px;top:1443.55px;font-size:20px;color:#1e1e1e;font-weight:400;transform:translateY(-16.93px);">21</div>
<div class="t" style="left:2651px;top:1443.55px;font-size:20px;color:#1e1e1e;font-weight:400;transform:translateY(-16.93px);">5</div>
<div class="r" style="left:2768px;top:1441.05px;width:20px;height:10.0px;background:#2f5a8c;"></div>
<div class="r" style="left:2803px;top:1441.05px;width:20px;height:10.0px;background:#3f7a66;"></div>
<div class="r" style="left:2838px;top:1441.05px;width:20px;height:10.0px;background:#275a4c;"></div>
<div class="t" style="left:2871px;top:1454.05px;font-size:27px;color:#1d3f7a;font-weight:400;transform:translateY(-22.86px);">+5</div>
<div class="t" style="left:622.3px;top:1535.5px;font-size:27px;color:#1e1e1e;font-weight:400;transform:translateY(-22.86px);">AWS</div>
<div class="t" style="left:838.7px;top:1535.5px;font-size:27px;color:#1e1e1e;font-weight:400;transform:translateY(-22.86px);">767399230...</div>
<div class="t" style="left:1053.3px;top:1535.5px;font-size:27px;color:#1e1e1e;font-weight:400;transform:translateY(-22.86px);">eu-west-2</div>
<div class="t" style="left:1247.6px;top:1535.5px;font-size:27px;color:#1e1e1e;font-weight:400;transform:translateY(-22.86px);">lambda_function_qybiu...</div>
<div class="t" style="left:1598px;top:1535.5px;font-size:27px;color:#1e1e1e;font-weight:400;transform:translateY(-22.86px);">$LATEST</div>
<div class="t" style="left:1753.8px;top:1535.5px;font-size:27px;color:#1e1e1e;font-weight:400;transform:translateY(-22.86px);">java11</div>
<div class="r" style="left:2375.7px;top:1507.4px;width:37.6px;height:37.6px;border-radius:50%;background:#7a2424"></div>
<div class="t" style="left:2388.5px;top:1533.7px;font-size:21px;color:#e8c8c8;font-weight:700;transform:translateY(-17.78px);">8</div>
<div class="r" style="left:2515px;top:1532.0px;width:218px;height:14.5px;background:#6b6e78;border-radius:8px"></div>
<div class="r" style="left:2582px;top:1532.0px;width:84px;height:14.5px;background:#5e2220;border-radius:8px"></div>
<div class="r" style="left:2649px;top:1532.0px;width:17px;height:14.5px;background:#3e0f0f;border-radius:0 8px 8px 0"></div>
<div class="t" style="left:2604px;top:1525.0px;font-size:20px;color:#1e1e1e;font-weight:400;transform:translateY(-16.93px);">21</div>
<div class="t" style="left:2651px;top:1525.0px;font-size:20px;color:#1e1e1e;font-weight:400;transform:translateY(-16.93px);">5</div>
<div class="r" style="left:2768px;top:1522.5px;width:20px;height:10.0px;background:#2f5a8c;"></div>
<div class="r" style="left:2803px;top:1522.5px;width:20px;height:10.0px;background:#3f7a66;"></div>
<div class="r" style="left:2838px;top:1522.5px;width:20px;height:10.0px;background:#275a4c;"></div>
<div class="t" style="left:2871px;top:1535.5px;font-size:27px;color:#1d3f7a;font-weight:400;transform:translateY(-22.86px);">+5</div>
<div class="t" style="left:622.3px;top:1616.95px;font-size:27px;color:#1e1e1e;font-weight:400;transform:translateY(-22.86px);">AWS</div>
<div class="t" style="left:838.7px;top:1616.95px;font-size:27px;color:#1e1e1e;font-weight:400;transform:translateY(-22.86px);">767399230...</div>
<div class="t" style="left:1053.3px;top:1616.95px;font-size:27px;color:#1e1e1e;font-weight:400;transform:translateY(-22.86px);">eu-west-2</div>
<div class="t" style="left:1247.6px;top:1616.95px;font-size:27px;color:#1e1e1e;font-weight:400;transform:translateY(-22.86px);">lambda_function_qybiu...</div>
<div class="t" style="left:1598px;top:1616.95px;font-size:27px;color:#1e1e1e;font-weight:400;transform:translateY(-22.86px);">$LATEST</div>
<div class="t" style="left:1753.8px;top:1616.95px;font-size:27px;color:#1e1e1e;font-weight:400;transform:translateY(-22.86px);">java11</div>
<div class="r" style="left:2375.7px;top:1588.8500000000001px;width:37.6px;height:37.6px;border-radius:50%;background:#7a2424"></div>
<div class="t" style="left:2388.5px;top:1615.15px;font-size:21px;color:#e8c8c8;font-weight:700;transform:translateY(-17.78px);">8</div>
<div class="r" style="left:2515px;top:1613.45px;width:218px;height:14.5px;background:#6b6e78;border-radius:8px"></div>
<div class="r" style="left:2582px;top:1613.45px;width:84px;height:14.5px;background:#5e2220;border-radius:8px"></div>
<div class="r" style="left:2649px;top:1613.45px;width:17px;height:14.5px;background:#3e0f0f;border-radius:0 8px 8px 0"></div>
<div class="t" style="left:2604px;top:1606.45px;font-size:20px;color:#1e1e1e;font-weight:400;transform:translateY(-16.93px);">21</div>
<div class="t" style="left:2651px;top:1606.45px;font-size:20px;color:#1e1e1e;font-weight:400;transform:translateY(-16.93px);">5</div>
<div class="r" style="left:2768px;top:1603.95px;width:20px;height:10.0px;background:#2f5a8c;"></div>
<div class="r" style="left:2803px;top:1603.95px;width:20px;height:10.0px;background:#3f7a66;"></div>
<div class="r" style="left:2838px;top:1603.95px;width:20px;height:10.0px;background:#275a4c;"></div>
<div class="t" style="left:2871px;top:1616.95px;font-size:27px;color:#1d3f7a;font-weight:400;transform:translateY(-22.86px);">+5</div>
<div class="t" style="left:622.3px;top:1698.4px;font-size:27px;color:#1e1e1e;font-weight:400;transform:translateY(-22.86px);">AWS</div>
<div class="t" style="left:838.7px;top:1698.4px;font-size:27px;color:#1e1e1e;font-weight:400;transform:translateY(-22.86px);">767399230...</div>
<div class="t" style="left:1053.3px;top:1698.4px;font-size:27px;color:#1e1e1e;font-weight:400;transform:translateY(-22.86px);">eu-west-2</div>
<div class="t" style="left:1247.6px;top:1698.4px;font-size:27px;color:#1e1e1e;font-weight:400;transform:translateY(-22.86px);">lambda_function_qybiu...</div>
<div class="t" style="left:1598px;top:1698.4px;font-size:27px;color:#1e1e1e;font-weight:400;transform:translateY(-22.86px);">$LATEST</div>
<div class="t" style="left:1753.8px;top:1698.4px;font-size:27px;color:#1e1e1e;font-weight:400;transform:translateY(-22.86px);">java11</div>
<div class="r" style="left:2375.7px;top:1670.3000000000002px;width:37.6px;height:37.6px;border-radius:50%;background:#7a2424"></div>
<div class="t" style="left:2388.5px;top:1696.6000000000001px;font-size:21px;color:#e8c8c8;font-weight:700;transform:translateY(-17.78px);">8</div>
<div class="r" style="left:2515px;top:1694.9px;width:218px;height:14.5px;background:#6b6e78;border-radius:8px"></div>
<div class="r" style="left:2582px;top:1694.9px;width:84px;height:14.5px;background:#5e2220;border-radius:8px"></div>
<div class="r" style="left:2649px;top:1694.9px;width:17px;height:14.5px;background:#3e0f0f;border-radius:0 8px 8px 0"></div>
<div class="t" style="left:2604px;top:1687.9px;font-size:20px;color:#1e1e1e;font-weight:400;transform:translateY(-16.93px);">21</div>
<div class="t" style="left:2651px;top:1687.9px;font-size:20px;color:#1e1e1e;font-weight:400;transform:translateY(-16.93px);">5</div>
<div class="r" style="left:2768px;top:1685.4px;width:20px;height:10.0px;background:#2f5a8c;"></div>
<div class="r" style="left:2803px;top:1685.4px;width:20px;height:10.0px;background:#3f7a66;"></div>
<div class="r" style="left:2838px;top:1685.4px;width:20px;height:10.0px;background:#275a4c;"></div>
<div class="t" style="left:2871px;top:1698.4px;font-size:27px;color:#1d3f7a;font-weight:400;transform:translateY(-22.86px);">+5</div>
<div class="t" style="left:622.3px;top:1779.85px;font-size:27px;color:#1e1e1e;font-weight:400;transform:translateY(-22.86px);">AWS</div>
<div class="t" style="left:838.7px;top:1779.85px;font-size:27px;color:#1e1e1e;font-weight:400;transform:translateY(-22.86px);">767399230...</div>
<div class="t" style="left:1053.3px;top:1779.85px;font-size:27px;color:#1e1e1e;font-weight:400;transform:translateY(-22.86px);">eu-west-2</div>
<div class="t" style="left:1247.6px;top:1779.85px;font-size:27px;color:#1e1e1e;font-weight:400;transform:translateY(-22.86px);">lambda_function_qybiu...</div>
<div class="t" style="left:1598px;top:1779.85px;font-size:27px;color:#1e1e1e;font-weight:400;transform:translateY(-22.86px);">$LATEST</div>
<div class="t" style="left:1753.8px;top:1779.85px;font-size:27px;color:#1e1e1e;font-weight:400;transform:translateY(-22.86px);">java11</div>
<div class="r" style="left:2375.7px;top:1751.75px;width:37.6px;height:37.6px;border-radius:50%;background:#7a2424"></div>
<div class="t" style="left:2388.5px;top:1778.05px;font-size:21px;color:#e8c8c8;font-weight:700;transform:translateY(-17.78px);">8</div>
<div class="r" style="left:2515px;top:1776.35px;width:218px;height:14.5px;background:#6b6e78;border-radius:8px"></div>
<div class="r" style="left:2582px;top:1776.35px;width:84px;height:14.5px;background:#5e2220;border-radius:8px"></div>
<div class="r" style="left:2649px;top:1776.35px;width:17px;height:14.5px;background:#3e0f0f;border-radius:0 8px 8px 0"></div>
<div class="t" style="left:2604px;top:1769.35px;font-size:20px;color:#1e1e1e;font-weight:400;transform:translateY(-16.93px);">21</div>
<div class="t" style="left:2651px;top:1769.35px;font-size:20px;color:#1e1e1e;font-weight:400;transform:translateY(-16.93px);">5</div>
<div class="r" style="left:2768px;top:1766.85px;width:20px;height:10.0px;background:#2f5a8c;"></div>
<div class="r" style="left:2803px;top:1766.85px;width:20px;height:10.0px;background:#3f7a66;"></div>
<div class="r" style="left:2838px;top:1766.85px;width:20px;height:10.0px;background:#275a4c;"></div>
<div class="t" style="left:2871px;top:1779.85px;font-size:27px;color:#1d3f7a;font-weight:400;transform:translateY(-22.86px);">+5</div>
<div class="t" style="left:622.3px;top:1861.3000000000002px;font-size:27px;color:#1e1e1e;font-weight:400;transform:translateY(-22.86px);">AWS</div>
<div class="t" style="left:838.7px;top:1861.3000000000002px;font-size:27px;color:#1e1e1e;font-weight:400;transform:translateY(-22.86px);">767399230...</div>
<div class="t" style="left:1053.3px;top:1861.3000000000002px;font-size:27px;color:#1e1e1e;font-weight:400;transform:translateY(-22.86px);">eu-west-2</div>
<div class="t" style="left:1247.6px;top:1861.3000000000002px;font-size:27px;color:#1e1e1e;font-weight:400;transform:translateY(-22.86px);">lambda_function_qybiu...</div>
<div class="t" style="left:1598px;top:1861.3000000000002px;font-size:27px;color:#1e1e1e;font-weight:400;transform:translateY(-22.86px);">$LATEST</div>
<div class="t" style="left:1753.8px;top:1861.3000000000002px;font-size:27px;color:#1e1e1e;font-weight:400;transform:translateY(-22.86px);">java11</div>
<div class="r" style="left:2375.7px;top:1833.2000000000003px;width:37.6px;height:37.6px;border-radius:50%;background:#7a2424"></div>
<div class="t" style="left:2388.5px;top:1859.5000000000002px;font-size:21px;color:#e8c8c8;font-weight:700;transform:translateY(-17.78px);">8</div>
<div class="r" style="left:2515px;top:1857.8000000000002px;width:218px;height:14.5px;background:#6b6e78;border-radius:8px"></div>
<div class="r" style="left:2582px;top:1857.8000000000002px;width:84px;height:14.5px;background:#5e2220;border-radius:8px"></div>
<div class="r" style="left:2649px;top:1857.8000000000002px;width:17px;height:14.5px;background:#3e0f0f;border-radius:0 8px 8px 0"></div>
<div class="t" style="left:2604px;top:1850.8000000000002px;font-size:20px;color:#1e1e1e;font-weight:400;transform:translateY(-16.93px);">21</div>
<div class="t" style="left:2651px;top:1850.8000000000002px;font-size:20px;color:#1e1e1e;font-weight:400;transform:translateY(-16.93px);">5</div>
<div class="r" style="left:2768px;top:1848.3000000000002px;width:20px;height:10.0px;background:#2f5a8c;"></div>
<div class="r" style="left:2803px;top:1848.3000000000002px;width:20px;height:10.0px;background:#3f7a66;"></div>
<div class="r" style="left:2838px;top:1848.3000000000002px;width:20px;height:10.0px;background:#275a4c;"></div>
<div class="t" style="left:2871px;top:1861.3000000000002px;font-size:27px;color:#1d3f7a;font-weight:400;transform:translateY(-22.86px);">+5</div>
<svg style="left:0;top:0" width="3024" height="300"><g fill="none" stroke="#4f5355" stroke-width="2.2"><circle cx="2791.5" cy="211.9" r="23.2"/><circle cx="2863.8" cy="211.9" r="23.2"/><circle cx="2936" cy="211.9" r="23.2"/></g><text x="2791.5" y="225.5" font-family="Liberation Sans" font-weight="700" font-size="34" fill="#4f5355" text-anchor="middle">?</text><path d="M2864.8,201.5 C2869,201.5 2871.5,205 2871.5,209 L2871.5,214 C2871.5,216.5 2873.5,218.5 2875.7,219.9 L2875.7,221 L2854,221 L2854,219.9 C2856,218.5 2858,216.5 2858,214 L2858,209 C2858,205 2860.6,201.5 2864.8,201.5 Z" fill="#4f5355"/><path d="M2860.9,222.5 L2868.9,222.5 C2868.5,225 2867,226.7 2864.8,226.7 C2862.6,226.7 2861.3,225 2860.9,222.5 Z" fill="#4f5355"/><g fill="none" stroke="#4f5355" stroke-width="2.6" stroke-linecap="round"><path d="M2944.34,211.68 A10.5,10.5 0 1 1 2935.82,203.16"/><path d="M2940.00,212.44 A6.09,6.09 0 1 1 2935.06,207.50"/><path d="M2934,213.5 L2942.93,204.57"/></g><circle cx="2934" cy="213.5" r="2.34" fill="#4f5355"/></svg>
<div class="t" style="left:2900.7px;top:256.7px;font-size:17px;color:#4a4a4a;font-weight:400;transform:translateY(-14.39px);">Scanning...</div>
<div class="r" style="left:884px;top:234px;width:1800px;height:1552px;background:#fff;box-shadow:0 4px 28px rgba(0,0,0,0.5);border:2px solid #d8d8d8;box-sizing:border-box"></div>
<div class="r" style="left:886px;top:236px;width:1796px;height:118px;background:#fafafa;"></div>
<div class="r" style="left:886px;top:354px;width:1796px;height:2px;background:#e3e3e3;"></div>
<div class="t" style="left:921px;top:311.9px;font-size:44px;color:#333;font-weight:400;transform:translateY(-37.25px);">Function details</div>
<div class="t" style="left:919px;top:420.5px;font-size:28px;color:#333;font-weight:400;transform:translateY(-23.70px);">Function</div>
<div class="t" style="left:1131.4px;top:420.5px;font-size:28px;color:#333;font-weight:400;transform:translateY(-23.70px);">aws/ap-northeast-1/lambda_function_paedmoym:$LATEST</div>
<div class="t" style="left:919px;top:470.35px;font-size:28px;color:#333;font-weight:400;transform:translateY(-23.70px);">Account ID</div>
<div class="t" style="left:1131.4px;top:470.35px;font-size:28px;color:#333;font-weight:400;transform:translateY(-23.70px);">767399230204</div>
<div class="t" style="left:919px;top:520.2px;font-size:28px;color:#333;font-weight:400;transform:translateY(-23.70px);">OS</div>
<div class="t" style="left:1131.4px;top:520.2px;font-size:28px;color:#333;font-weight:400;transform:translateY(-23.70px);">linux</div>
<div class="t" style="left:919px;top:570.05px;font-size:28px;color:#333;font-weight:400;transform:translateY(-23.70px);">Runtime</div>
<div class="t" style="left:1131.4px;top:570.05px;font-size:28px;color:#333;font-weight:400;transform:translateY(-23.70px);">java11</div>
<div class="t" style="left:919px;top:619.9px;font-size:28px;color:#333;font-weight:400;transform:translateY(-23.70px);">Memory</div>
<div class="t" style="left:1131.4px;top:619.9px;font-size:28px;color:#333;font-weight:400;transform:translateY(-23.70px);">128MB</div>
<div class="t" style="left:919px;top:669.75px;font-size:28px;color:#333;font-weight:400;transform:translateY(-23.70px);">Timeout</div>
<div class="t" style="left:1131.4px;top:669.75px;font-size:28px;color:#333;font-weight:400;transform:translateY(-23.70px);">3sec</div>
<div class="t" style="left:919px;top:719.6px;font-size:28px;color:#333;font-weight:400;transform:translateY(-23.70px);">Provider</div>
<div class="t" style="left:1131.4px;top:719.6px;font-size:28px;color:#333;font-weight:400;transform:translateY(-23.70px);">AWS</div>
<div class="r" style="left:918px;top:791.5px;width:1702px;height:77.89999999999998px;background:#ededed;"></div>
<div class="r" style="left:918px;top:791.5px;width:242px;height:77.89999999999998px;background:#fff;"></div>
<div class="r" style="left:918px;top:791.5px;width:242px;height:6.5px;background:#2e6dd0;"></div>
<div class="t" style="left:950.3px;top:844.1px;font-size:28px;color:#333;font-weight:700;transform:translateY(-23.70px) scaleX(0.88);">Vulnerabilities</div>
<div class="t" style="left:1192.6px;top:844.1px;font-size:28px;color:#666;font-weight:400;transform:translateY(-23.70px);">Compliance</div>
<div class="t" style="left:1400.8px;top:844.1px;font-size:28px;color:#666;font-weight:400;transform:translateY(-23.70px);">Package info</div>
<div class="t" style="left:1620.4px;top:844.1px;font-size:28px;color:#666;font-weight:400;transform:translateY(-23.70px);">Layers info</div>
<div class="r" style="left:918.5px;top:936.5px;width:1300.5px;height:64.5px;background:#fff;border:2.5px solid #2a6bd0;border-radius:6px;box-sizing:border-box"></div>
<svg style="left:0;top:0" width="3024" height="1100"><path d="M937,956 L963,956 L953.5,968 L953.5,982 L946.5,976.5 L946.5,968 Z" fill="#9a9a9a"/><g stroke="#c4c4c4" stroke-width="4.2"><path d="M2174.5,961.5 L2190,977"/><path d="M2190,961.5 L2174.5,977"/></g><circle cx="2268" cy="969.6" r="15.8" fill="#cfcfcf"/><text x="2268" y="979.8" font-family="Liberation Sans" font-weight="700" font-size="27" fill="#7b7b7b" text-anchor="middle">?</text></svg>
<div class="t" style="left:981px;top:978.8px;font-size:28px;color:#aaa;font-weight:400;transform:translateY(-23.70px);">Filter vulnerabilities by keywords and attributes</div>
<div class="t" style="left:2317.5px;top:976.8px;font-size:24px;color:#333;font-weight:400;transform:translateY(-20.32px);">1 total entry</div>
<div class="r" style="left:919px;top:1026px;width:1670px;height:630px;background:#fff;"></div>
<div class="r" style="left:919px;top:1026px;width:1670px;height:2px;background:#e6e6e6;"></div>
<div class="r" style="left:919px;top:1026px;width:2px;height:630px;background:#e6e6e6;"></div>
<div class="r" style="left:919px;top:1093.5px;width:1670px;height:2.0px;background:#e6e6e6;"></div>
<div class="r" style="left:1086.8px;top:1026px;width:2.0px;height:119.70000000000005px;background:#e6e6e6;"></div>
<div class="r" style="left:1336.7px;top:1026px;width:2.0px;height:119.70000000000005px;background:#e6e6e6;"></div>
<div class="r" style="left:2220.8px;top:1026px;width:2.0px;height:119.70000000000005px;background:#e6e6e6;"></div>
<div class="r" style="left:921px;top:1095.5px;width:1667px;height:50.200000000000045px;background:#d6e6f7;"></div>
<div class="r" style="left:920px;top:1095.5px;width:4.5px;height:560.5px;background:#90c4fb;"></div>
<div class="r" style="left:2584px;top:1095.5px;width:4px;height:560.5px;background:#90c4fb;"></div>
<div class="r" style="left:1086.8px;top:1095.5px;width:2.0px;height:50.200000000000045px;background:#e2eaf3;"></div>
<div class="r" style="left:1336.7px;top:1095.5px;width:2.0px;height:50.200000000000045px;background:#e2eaf3;"></div>
<div class="r" style="left:2220.8px;top:1095.5px;width:2.0px;height:50.200000000000045px;background:#e2eaf3;"></div>
<div class="t" style="left:936px;top:1071.5px;font-size:28px;color:#333;font-weight:700;transform:translateY(-23.70px) scaleX(0.88);">Type</div>
<div class="t" style="left:1106.4px;top:1072px;font-size:28px;color:#333;font-weight:700;transform:translateY(-23.70px) scaleX(0.88);">Highest se...</div>
<div class="t" style="left:1355.4px;top:1072px;font-size:28px;color:#333;font-weight:700;transform:translateY(-23.70px) scaleX(0.88);">Description</div>
<div class="t" style="left:2240px;top:1071.9px;font-size:28px;color:#333;font-weight:700;transform:translateY(-23.70px) scaleX(0.88);">Found in</div>
<div class="t" style="left:1355.4px;top:1119.7px;font-size:28px;color:#333;font-weight:400;transform:translateY(-23.70px);">vulnerabilities</div>
<svg style="left:0;top:0" width="3024" height="1886"><g fill="none" stroke="#c8c8c8" stroke-width="3.6"><path d="M1043.7,1057.6000000000001 L1043.7,1073.9"/><path d="M1035.3,1066.2 L1043.7,1074.6000000000001 L1052.1,1066.2"/><path d="M1061.5,1066.2 L1061.5,1049.9"/><path d="M1053.1,1057.6000000000001 L1061.5,1049.2 L1069.9,1057.6000000000001"/></g><g fill="none" stroke="#c8c8c8" stroke-width="3.6"><path d="M1293.7,1057.6000000000001 L1293.7,1073.9"/><path d="M1285.3,1066.2 L1293.7,1074.6000000000001 L1302.1,1066.2"/><path d="M1311.5,1066.2 L1311.5,1049.9"/><path d="M1303.1,1057.6000000000001 L1311.5,1049.2 L1319.9,1057.6000000000001"/></g><g fill="none" stroke="#c8c8c8" stroke-width="3.6"><path d="M1867.3,1264.2 L1867.3,1280.5"/><path d="M1858.8999999999999,1272.8 L1867.3,1281.2 L1875.6999999999998,1272.8"/><path d="M1885.1,1272.8 L1885.1,1256.5"/><path d="M1876.6999999999998,1264.2 L1885.1,1255.8 L1893.5,1264.2"/></g></svg>
<div class="r" style="left:2589px;top:1026px;width:31px;height:630px;background:#fafafa;"></div>
<div class="r" style="left:2589px;top:1026px;width:2.5px;height:630px;background:#e8e8e8;"></div>
<div class="r" style="left:2618px;top:1026px;width:2px;height:630px;background:#efefef;"></div>
<div class="r" style="left:2598px;top:1041.8px;width:16px;height:113.20000000000005px;background:#c1c1c1;border-radius:8px"></div>
<div class="t" style="left:988px;top:1278px;font-size:28px;color:#333;font-weight:700;transform:translateY(-23.70px) scaleX(0.88);">Severity</div>
<div class="t" style="left:1166.1px;top:1278px;font-size:28px;color:#333;font-weight:700;transform:translateY(-23.70px) scaleX(0.88);">Package</div>
<div class="t" style="left:1343.6px;top:1278px;font-size:28px;color:#333;font-weight:700;transform:translateY(-23.70px) scaleX(0.88);">CVE</div>
<div class="t" style="left:1521px;top:1278px;font-size:28px;color:#333;font-weight:700;transform:translateY(-23.70px) scaleX(0.88);">Fix ...</div>
<svg style="left:0;top:0" width="3024" height="1886"><circle cx="1630.1" cy="1268" r="16" fill="#cfcfcf"/><text x="1630.1" y="1278.2" font-family="Liberation Sans" font-weight="700" font-size="27" fill="#7b7b7b" text-anchor="middle">?</text><circle cx="1000.2" cy="1339.7" r="12.2" fill="#8b1a1a"/><circle cx="1780.8" cy="1339.3" r="18.6" fill="#c9413f"/></svg>
<div class="t" style="left:1678.8px;top:1278px;font-size:28px;color:#333;font-weight:700;transform:translateY(-23.70px) scaleX(0.88);">Risk factors</div>
<div class="t" style="left:1927px;top:1278px;font-size:28px;color:#333;font-weight:700;transform:translateY(-23.70px) scaleX(0.88);">Description</div>
<div class="t" style="left:2222.4px;top:1278px;font-size:28px;color:#333;font-weight:700;transform:translateY(-23.70px) scaleX(0.88);">Tags</div>
<div class="t" style="left:1035.5px;top:1346.8px;font-size:28px;color:#333;font-weight:400;transform:translateY(-23.70px);">critical</div>
<div class="t" style="left:1166.1px;top:1346.8px;font-size:28px;color:#333;font-weight:400;transform:translateY(-23.70px);">com.faste...</div>
<div class="t" style="left:1343.6px;top:1346.8px;font-size:28px;color:#2a6bc8;font-weight:400;transform:translateY(-23.70px);">CVE-2018-</div>
<div class="t" style="left:1343.6px;top:1386.1px;font-size:28px;color:#2a6bc8;font-weight:400;transform:translateY(-23.70px);">19360</div>
<div class="t" style="left:1521px;top:1346.8px;font-size:28px;color:#333;font-weight:400;transform:translateY(-23.70px);">Fixed in:</div>
<div class="t" style="left:1521px;top:1386.1px;font-size:28px;color:#333;font-weight:700;transform:translateY(-23.70px) scaleX(0.88);">2.9.8, 2....</div>
<div class="t" style="left:1521px;top:1448px;font-size:28px;color:#333;font-weight:400;transform:translateY(-23.70px);">more than</div>
<div class="t" style="left:1521px;top:1488.9px;font-size:28px;color:#333;font-weight:400;transform:translateY(-23.70px);">4 years</div>
<div class="t" style="left:1521px;top:1529px;font-size:28px;color:#333;font-weight:400;transform:translateY(-23.70px);">ago</div>
<div class="t" style="left:1773.5px;top:1348px;font-size:20px;color:#fff;font-weight:700;transform:translateY(-16.93px);">5</div>
<div class="t" style="left:1927px;top:1346.8px;font-size:28px;color:#333;font-weight:400;transform:translateY(-23.70px);">Impacted versions:</div>
<div class="t" style="left:1927px;top:1386.1px;font-size:28px;color:#333;font-weight:400;transform:translateY(-23.70px);">&lt;=2.6.7.2,2.6 and</div>
<div class="t" style="left:1927px;top:1426.6px;font-size:28px;color:#333;font-weight:400;transform:translateY(-23.70px);">&gt;=2.6.0,2.6</div>
<div class="t" style="left:1927px;top:1466.6px;font-size:28px;color:#333;font-weight:400;transform:translateY(-23.70px);">Published: more than</div>
<div class="t" style="left:1927px;top:1506.7px;font-size:28px;color:#333;font-weight:400;transform:translateY(-23.70px);">4 years ago</div>
<div class="t" style="left:1927px;top:1555.7px;font-size:28px;color:#333;font-weight:400;transform:translateY(-23.70px);">FasterXML jackson-</div>
<div class="t" style="left:1927px;top:1595.8px;font-size:28px;color:#333;font-weight:400;transform:translateY(-23.70px);">databind 2.x before</div>
<div class="t" style="left:1927px;top:1635.5px;font-size:28px;color:#333;font-weight:400;transform:translateY(-23.70px);">2.9.8 might allow</div>
<div class="r" style="left:2206.5px;top:1300.7px;width:267.1999999999998px;height:42.700000000000045px;background:#fff;border:2px solid #cfcfcf;border-radius:3px;box-sizing:border-box"></div>
<div class="t" style="left:2229.8px;top:1331.2px;font-size:29px;color:#2a6bc8;font-weight:400;transform:translateY(-24.55px) scaleX(0.965);">Add Tags to CVE</div>
<div class="r" style="left:886px;top:1656px;width:1796px;height:128px;background:#fff;"></div>
<div class="r" style="left:886px;top:1655px;width:1796px;height:2.5px;background:#e6e6e6;"></div>
<div class="r" style="left:2652px;top:356px;width:30px;height:1300px;background:#fafafa;"></div>
<div class="r" style="left:2652px;top:356px;width:1.5px;height:1300px;background:#e8e8e8;"></div>
<div class="r" style="left:2660.4px;top:361.7px;width:15.599999999999909px;height:1144.3px;background:#c1c1c1;border-radius:8px"></div>
<div class="r" style="left:2530.4px;top:1689.4px;width:119.09999999999991px;height:62.899999999999864px;background:linear-gradient(#fafafa,#eeeeee);border:2px solid #cccccc;border-radius:9px;box-sizing:border-box"></div>
<div class="t" style="left:2556.9px;top:1731.8px;font-size:28px;color:#2a6bc8;font-weight:400;transform:translateY(-23.70px) scaleX(0.95);">Close</div>
</body></html>
